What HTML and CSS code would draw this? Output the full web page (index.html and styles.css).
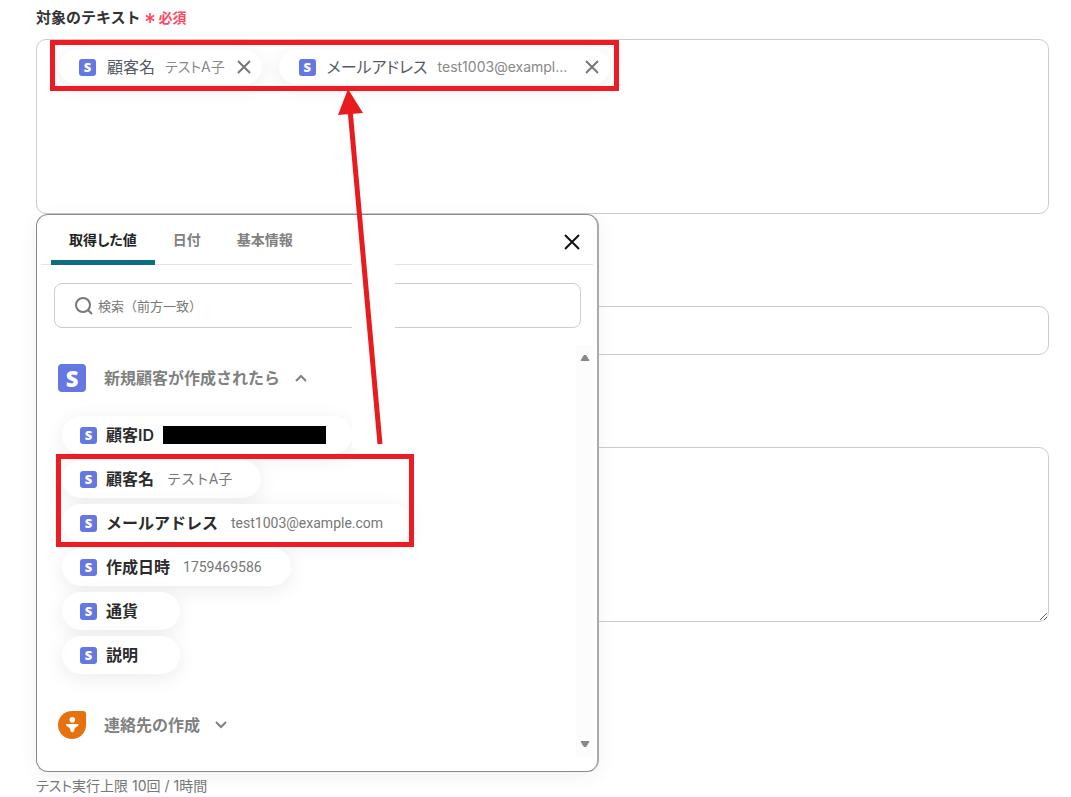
FILE: index.html
```html
<!DOCTYPE html>
<html lang="ja">
<head>
  <meta charset="UTF-8">
  <meta name="viewport" content="width=device-width, initial-scale=1.0">
  <title>対象のテキスト</title>
  <link rel="stylesheet" href="styles.css">
</head>
<body>

  <main class="form">
    <div class="field">
      <div class="label" id="target-label">対象のテキスト <span class="required"><svg class="asterisk" viewBox="0 0 12 12"><path d="M6 0v12M1 3l10 6M11 3L1 9"/></svg>必須</span></div>

      <div class="editor" role="textbox" aria-labelledby="target-label">
        <span class="chip">
          <span class="logo">S</span>
          <span class="chip-name">顧客名</span>
          <span class="chip-value">テストA子</span>
          <button class="remove" aria-label="削除"><svg viewBox="0 0 14 14"><path d="M1 1l12 12M13 1L1 13"/></svg></button>
        </span>
        <span class="chip">
          <span class="logo">S</span>
          <span class="chip-name">メールアドレス</span>
          <span class="chip-value truncated">test1003@exampl...</span>
          <button class="remove" aria-label="削除"><svg viewBox="0 0 14 14"><path d="M1 1l12 12M13 1L1 13"/></svg></button>
        </span>
      </div>

      <section class="panel">
        <div class="tabs">
          <button class="tab active">取得した値</button>
          <button class="tab">日付</button>
          <button class="tab">基本情報</button>
          <button class="close" aria-label="閉じる"><svg viewBox="0 0 16 16"><path d="M1 1l14 14M15 1L1 15"/></svg></button>
        </div>

        <label class="search">
          <svg viewBox="0 0 18 18"><circle cx="8" cy="8" r="7"/><path d="M13 13l4 4"/></svg>
          <input type="text" placeholder="検索（前方一致）" aria-label="検索">
        </label>

        <div class="scroller">
          <div class="groups">
            <button class="group">
              <span class="logo large">S</span>
              <span>新規顧客が作成されたら</span>
              <svg class="chevron" viewBox="0 0 12 8"><path d="M1 7l5-5 5 5"/></svg>
            </button>

            <div class="values">
              <button class="value"><span class="logo">S</span><b>顧客ID</b><span class="redacted"></span></button>
              <button class="value"><span class="logo">S</span><b>顧客名</b><span class="sample">テストA子</span></button>
              <button class="value"><span class="logo">S</span><b>メールアドレス</b><span class="sample">test1003@example.com</span></button>
              <button class="value"><span class="logo">S</span><b>作成日時</b><span class="sample">1759469586</span></button>
              <button class="value"><span class="logo">S</span><b>通貨</b><span class="sample"></span></button>
              <button class="value"><span class="logo">S</span><b>説明</b><span class="sample"></span></button>
            </div>

            <button class="group">
              <svg class="contact" viewBox="0 0 28 28">
                <path d="M14 0h11a3 3 0 0 1 3 3v11A14 14 0 1 1 14 0z" fill="#e8710f"/>
                <circle cx="14.300" cy="8.800" r="2.800" fill="#fff"/>
                <path d="M8 13h12.600c0 1.800-1.200 2.800-2.800 3.200L16.300 18v2l-2 1.400-2-1.400v-2l-1.500-1.800C9.200 15.800 8 14.800 8 13z" fill="#fff"/>
              </svg>
              <span>連絡先の作成</span>
              <svg class="chevron" viewBox="0 0 12 8"><path d="M1 1l5 5 5-5"/></svg>
            </button>
          </div>

          <div class="scrollbar">
            <svg viewBox="0 0 10 8"><path d="M4 1.500L1 6.500h8L6 1.500z"/></svg>
            <svg viewBox="0 0 10 8"><path d="M4 6.500L1 1.500h8L6 6.500z"/></svg>
          </div>
        </div>
      </section>
    </div>

    <input class="input" type="text" aria-label="入力">
    <textarea class="textarea" aria-label="本文"></textarea>

    <p class="note">テスト実行上限 10回 / 1時間</p>

    <!-- callouts over the form -->
    <div class="blank"></div>
    <div class="frame frame-target"></div>
    <div class="frame frame-source"></div>
    <svg class="arrow" viewBox="0 0 50 356">
      <path d="M42 355L12 20" fill="none" stroke="#e81c1e" stroke-width="5"/>
      <path d="M10 0L0 26l25-2z" fill="#e81c1e"/>
    </svg>
  </main>

</body>
</html>
```
FILE: styles.css
```css
* {
  box-sizing: border-box;
}

body {
  margin: 0;
  background: #fff;
  color: #333;
  font-family: Inter, "Noto Sans CJK JP", sans-serif;
  font-size: 14px;
  line-height: 20px;
}

button {
  margin: 0;
  padding: 0;
  border: none;
  background: none;
  font: inherit;
  color: inherit;
  cursor: pointer;
}

svg {
  display: block;
  flex: none;
  fill: none;
  stroke: currentColor;
}

.form {
  position: relative;
  display: flex;
  flex-direction: column;
  padding: 8px 22px 0 36px;
}

.field {
  position: relative;
  margin-bottom: 92px;
}

.label {
  display: flex;
  align-items: center;
  gap: 4px;
  margin-bottom: 11px;
  font-size: 15px;
  font-weight: 600;
}

.required {
  display: flex;
  align-items: center;
  gap: 4px;
  color: #ff4a64;
  font-size: 14px;
}

.asterisk {
  width: 10px;
  height: 10px;
  stroke-width: 2;
}

.editor,
.input,
.textarea {
  width: 100%;
  border: 1px solid #ccc;
  border-radius: 10px;
  background: #fff;
}

.editor {
  display: flex;
  align-items: flex-start;
  gap: 17px;
  height: 175px;
  padding: 10px 22px;
}

.input {
  height: 49px;
  margin-bottom: 92px;
}

.textarea {
  display: block;
  height: 175px;
  margin-bottom: 154px;
  resize: vertical;
}

.chip,
.value {
  display: flex;
  align-items: center;
  border-radius: 20px;
  background: #fff;
  box-shadow: 0 4px 20px rgba(0, 0, 0, 0.08);
}

.chip {
  height: 34px;
  padding: 0 11px 0 20px;
  font-feature-settings: "palt";
}

.chip-name {
  margin: 0 10px 0 11px;
  color: #555b64;
  font-size: 16px;
}

.chip-value {
  color: #888;
}

.truncated {
  width: 135px;
}

.remove {
  margin-left: 12px;
  color: #777;
}

.remove svg {
  width: 14px;
  height: 14px;
  stroke-width: 2;
}

.logo {
  display: flex;
  align-items: center;
  justify-content: center;
  flex: none;
  width: 17px;
  height: 17px;
  border-radius: 3px;
  background: #6577e2;
  color: #fff;
  font-family: "Open Sans", sans-serif;
  font-size: 13px;
  font-weight: 800;
}

.logo.large {
  width: 28px;
  height: 28px;
  border-radius: 4px;
  font-size: 22px;
}

/* value picker */
.panel {
  position: absolute;
  top: 100%;
  left: 0;
  width: 563px;
  padding: 0 4px 14px;
  border: 1px solid #888;
  border-right: 2px solid #aaa;
  border-radius: 12px;
  background: #fff;
  box-shadow: 0 4px 20px rgba(0, 0, 0, 0.06);
}

.tabs {
  display: flex;
  height: 50px;
  padding: 0 13px 0 10px;
  border-bottom: 1px solid #e4e4e4;
  font-feature-settings: "palt";
}

.tab {
  height: 50px;
  padding: 4px 18px 0;
  border-bottom: 5px solid transparent;
  color: #808080;
  font-weight: 600;
}

.tab.active {
  border-bottom-color: #0d6e83;
  border-radius: 3px 3px 0 0;
  color: #222;
}

.close {
  margin-left: auto;
  padding-top: 5px;
  color: #111;
}

.close svg {
  width: 16px;
  height: 16px;
  stroke-width: 2;
}

.search {
  display: flex;
  align-items: center;
  gap: 5px;
  height: 45px;
  margin: 18px 12px 17px 13px;
  padding: 0 20px;
  border: 1px solid #ccc;
  border-radius: 8px;
  color: #777;
}

.search svg {
  width: 18px;
  height: 18px;
  stroke-width: 2;
}

.search input {
  flex: 1;
  min-width: 0;
  padding: 0;
  border: none;
  outline: none;
  background: none;
  font: inherit;
  font-size: 13px;
}

.search input::placeholder {
  color: #777;
}

.scroller {
  display: flex;
  justify-content: space-between;
  height: 412px;
}

.groups {
  padding: 19px 17px;
}

.group {
  display: flex;
  align-items: center;
  gap: 18px;
  height: 28px;
  color: #808080;
  font-size: 16px;
  font-weight: 600;
}

.chevron {
  width: 12px;
  height: 8px;
  margin-left: -3px;
  stroke-width: 2;
}

.contact {
  width: 28px;
  height: 28px;
  stroke: none;
}

.values {
  display: flex;
  flex-direction: column;
  align-items: flex-start;
  gap: 6px;
  padding: 24px 4px 37px;
}

.value {
  height: 38px;
  padding: 0 29px 0 18px;
  color: #2b2b2b;
}

.value b {
  margin: 0 13px 0 9px;
  font-size: 16px;
  font-weight: 600;
}

.sample {
  color: #777;
  font-family: Roboto, "Noto Sans CJK JP", sans-serif;
}

.redacted {
  width: 163px;
  height: 18px;
  margin: 0 -3px 0 -4px;
  background: #000;
}

.scrollbar {
  display: flex;
  flex-direction: column;
  justify-content: space-between;
  width: 17px;
  padding: 9px 4px;
  background: #fcfcfc;
}

.scrollbar svg {
  width: 10px;
  height: 8px;
  fill: #888;
  stroke: #888;
  stroke-linejoin: round;
}

.note {
  margin: 0;
  color: #777;
  font-feature-settings: "palt";
}

/* callouts */
.blank {
  position: absolute;
  top: 218px;
  left: 352px;
  width: 43px;
  height: 230px;
  background: #fff;
}

.frame {
  position: absolute;
  border: 5px solid #ed1c24;
}

.frame-target {
  top: 40px;
  left: 50px;
  width: 569px;
  height: 51px;
}

.frame-source {
  top: 454px;
  left: 56px;
  width: 358px;
  height: 93px;
}

.arrow {
  position: absolute;
  top: 89px;
  left: 338px;
  width: 50px;
  height: 356px;
  stroke: none;
}
```
